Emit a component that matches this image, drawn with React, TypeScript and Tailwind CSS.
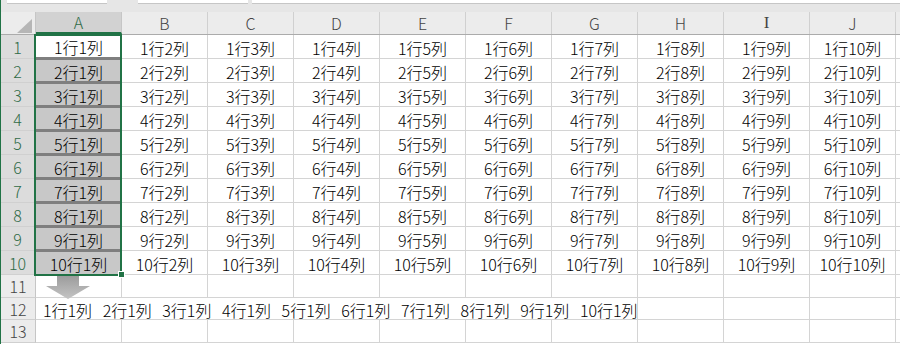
import React from 'react';

const COLS = ['A', 'B', 'C', 'D', 'E', 'F', 'G', 'H', 'I', 'J'];
const ROWS = Array.from({ length: 10 }, (_, i) => i + 1);

const font = { fontFamily: '"Noto Sans CJK JP", "Noto Sans", sans-serif' };

function RowHeader({ n, selected, h }: { n: number; selected?: boolean; h: string }) {
    return (
        <div
            className={`${h} w-[35px] shrink-0 flex items-center justify-center border-b border-[#d0d0d0] text-[16px] font-light ${
                selected
                    ? 'bg-[#dcdcdc] text-[#2f6b47] border-r-2 border-r-[#217346]'
                    : 'bg-[#ececec] text-[#444] border-r border-r-[#c6c6c6]'
            }`}
        >
            {n}
        </div>
    );
}

function Cell({ text, className = '' }: { text?: string; className?: string }) {
    return (
        <div
            className={`w-[86px] shrink-0 flex items-center justify-center pt-[2px] border-r border-b border-[#d4d4d4] text-[16px] font-light leading-none text-black whitespace-nowrap ${className}`}
        >
            {text}
        </div>
    );
}

export default function App() {
    const row12 = ROWS.map((r) => `${r}行1列`).join(' ');

    return (
        <div className="relative w-[900px] h-[344px] overflow-hidden bg-white border-l border-[#217346]" style={font}>
            {/* formula bar strip */}
            <div className="h-[12px] bg-[#e6e6e6] flex items-start">
                <div className="ml-[6px] w-[100px] h-[4px] bg-white border-b border-[#c6c6c6]" />
                <div className="ml-[31px] w-[110px] h-[4px] bg-white border-b border-[#c6c6c6]" />
                <div className="ml-[4px] flex-1 h-[4px] bg-white border-b border-[#c6c6c6]" />
            </div>

            {/* column headers */}
            <div className="flex h-[23px] bg-[#ececec] border-b border-[#ababab]">
                <div className="w-[35px] shrink-0 relative border-r border-[#c6c6c6]">
                    <svg className="absolute left-[16px] top-[7px]" width="15" height="14" viewBox="0 0 15 14">
                        <polygon points="15,0 15,14 0,14" fill="#b6b6b6" />
                    </svg>
                </div>
                {COLS.map((c, i) => (
                    <div
                        key={c}
                        className={`w-[86px] shrink-0 flex items-center justify-center text-[16px] font-light ${
                            i === 0
                                ? 'bg-[#d2d2d2] text-[#2f6b47] border-b-2 border-[#217346] border-r border-r-[#c6c6c6]'
                                : 'text-[#444] border-r border-[#d0d0d0]'
                        }`}
                        style={c === 'I' ? { fontFamily: '"Liberation Serif", serif', fontSize: 17 } : undefined}
                    >
                        {c}
                    </div>
                ))}
                <div className="flex-1" />
            </div>

            {/* data rows */}
            {ROWS.map((r) => (
                <div key={r} className="flex h-[24px]">
                    <RowHeader n={r} selected h="h-[24px]" />
                    {COLS.map((c, i) => {
                        if (i === 0) {
                            return (
                                <div key={c} className="w-[86px] h-[24px] shrink-0 flex flex-col border-r border-[#d4d4d4]">
                                    {r > 1 && <div className="h-[1px] shrink-0 bg-[#7f7f7f]" />}
                                    <div
                                        className={`flex-1 min-h-0 flex items-center justify-center pt-[2px] text-[16px] font-light leading-none text-black whitespace-nowrap ${
                                            r === 1 ? 'bg-white' : 'bg-[#c8c8c8]'
                                        }`}
                                    >
                                        {`${r}行1列`}
                                    </div>
                                    {r < 10 ? (
                                        <div className="h-[2px] shrink-0 bg-[#7f7f7f]" />
                                    ) : (
                                        <div className="h-[1px] shrink-0 bg-[#c8c8c8]" />
                                    )}
                                </div>
                            );
                        }
                        return <Cell key={c} text={`${r}行${i + 1}列`} />;
                    })}
                    <div className="flex-1 border-b border-[#d4d4d4]" />
                </div>
            ))}

            {/* row 11 */}
            <div className="flex h-[23px]">
                <RowHeader n={11} h="h-[23px]" />
                {COLS.map((c) => (
                    <Cell key={c} />
                ))}
                <div className="flex-1 border-b border-[#d4d4d4]" />
            </div>

            {/* row 12 */}
            <div className="flex h-[22px]">
                <RowHeader n={12} h="h-[22px]" />
                <div className="w-[602px] shrink-0 flex items-center pl-[7px] pt-[2px] border-r border-b border-[#d4d4d4] text-[16px] font-light leading-none text-black whitespace-nowrap [word-spacing:7px]">
                    {row12}
                </div>
                <Cell />
                <Cell />
                <Cell />
                <div className="flex-1 border-b border-[#d4d4d4]" />
            </div>

            {/* row 13 */}
            <div className="flex h-[23px]">
                <RowHeader n={13} h="h-[23px]" />
                {COLS.map((c) => (
                    <Cell key={c} />
                ))}
                <div className="flex-1 border-b border-[#d4d4d4]" />
            </div>

            {/* selection outline A1:A10 */}
            <div className="absolute left-[33px] top-[34px] w-[88px] h-[242px] border-2 border-[#217346] pointer-events-none" />
            <div className="absolute left-[117px] top-[271px] w-[7px] h-[7px] bg-[#217346] border border-white" />

            {/* down arrow */}
            <svg className="absolute left-[43px] top-[276px]" width="48" height="24" viewBox="0 0 48 24">
                <defs>
                    <linearGradient id="arrowFill" x1="0" y1="0" x2="0" y2="1">
                        <stop offset="0" stopColor="#9c9c9c" />
                        <stop offset="1" stopColor="#c4c4c4" />
                    </linearGradient>
                </defs>
                <polygon points="13,0 35,0 35,10 46,10 24,23 2,10 13,10" fill="url(#arrowFill)" />
            </svg>
        </div>
    );
}
